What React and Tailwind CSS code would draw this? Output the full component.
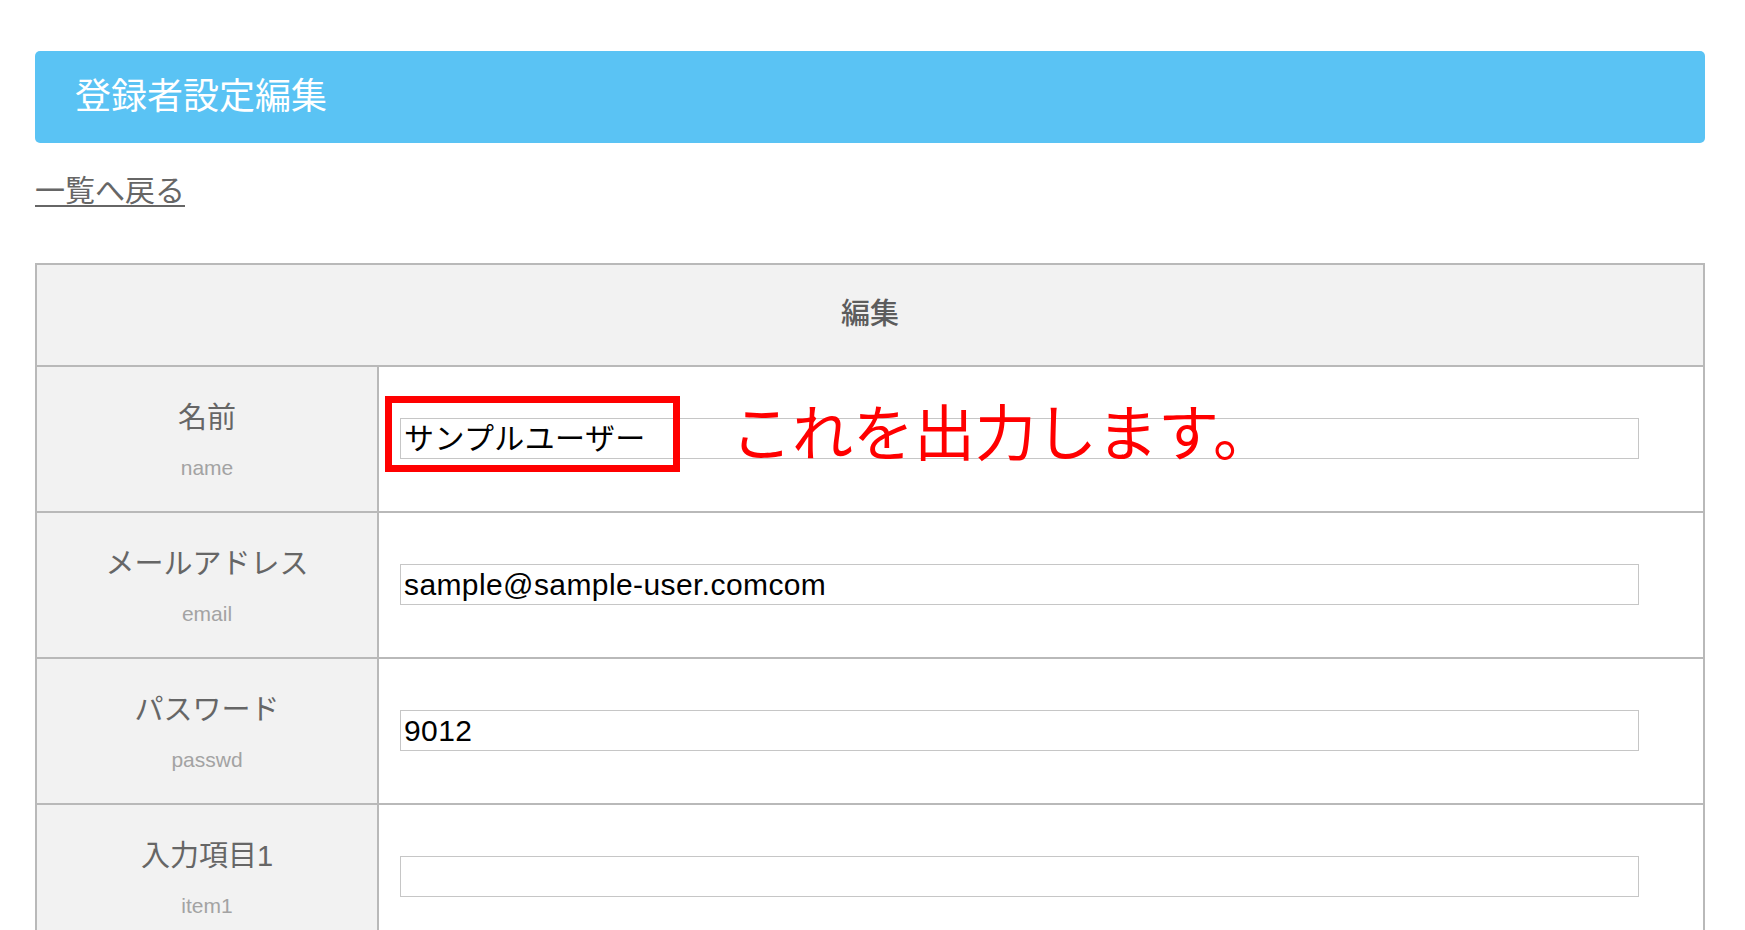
import React from 'react';

const FIELDS = [
  { label: '名前', key: 'name', value: 'サンプルユーザー', marked: true },
  { label: 'メールアドレス', key: 'email', value: 'sample@sample-user.comcom' },
  { label: 'パスワード', key: 'passwd', value: '9012' },
  { label: '入力項目1', key: 'item1', value: '' },
];

function FieldRow({ field }) {
  return (
    <div className="grid grid-cols-[342px_1fr] h-[146px] border-t-2 border-[#b9b9b9]">
      <div className="flex flex-col items-center justify-center bg-[#f2f2f2] border-r-2 border-[#b9b9b9] pt-[4px]">
        <span className="text-[29px] leading-[40px] text-[#666666]">{field.label}</span>
        <span className="mt-[14px] text-[21px] leading-[32px] text-[#a3a3a3]">{field.key}</span>
      </div>
      <div className="flex items-center pl-[21px] pb-[2px]">
        <div className="relative">
          <input
            readOnly
            value={field.value}
            className="block w-[1239px] h-[41px] border border-[#c6c6c6] bg-white px-[3px] text-[30px] tracking-[0.4px] text-black outline-none font-['Liberation_Sans','Noto_Sans_CJK_JP',sans-serif]"
          />
          {field.marked && (
            <>
              {/* annotation: red frame + note */}
              <div className="absolute left-[-15px] top-[-22px] w-[295px] h-[76px] border-[7px] border-[#ff0000] pointer-events-none" />
              <div className="absolute left-[331px] top-[-24px] whitespace-nowrap text-[61px] leading-[72px] text-[#ff0000] font-['Noto_Sans_CJK_JP',sans-serif] font-normal pointer-events-none">
                これを出力します。
              </div>
            </>
          )}
        </div>
      </div>
    </div>
  );
}

export default function App() {
  return (
    <div className="h-screen overflow-hidden bg-white pl-[35px] pr-[40px] pt-[51px] font-['Liberation_Sans','Noto_Sans_CJK_JP',sans-serif]">
      <div className="flex items-center h-[92px] rounded-[5px] bg-[#5ac3f4] pl-[40px]">
        <h1 className="text-[36px] leading-none text-white font-normal">登録者設定編集</h1>
      </div>

      <div className="mt-[25px] mb-[50px]">
        <a href="#" className="text-[30px] leading-[45px] text-[#666666] underline underline-offset-[4px] decoration-[2px]">
          一覧へ戻る
        </a>
      </div>

      <div className="border-2 border-b-0 border-[#b9b9b9]">
        <div className="flex items-center justify-center h-[100px] bg-[#f2f2f2]">
          <span className="text-[29px] font-medium text-[#5c5c5c]">編集</span>
        </div>
        {FIELDS.map(f => (
          <FieldRow key={f.key} field={f} />
        ))}
      </div>
    </div>
  );
}
